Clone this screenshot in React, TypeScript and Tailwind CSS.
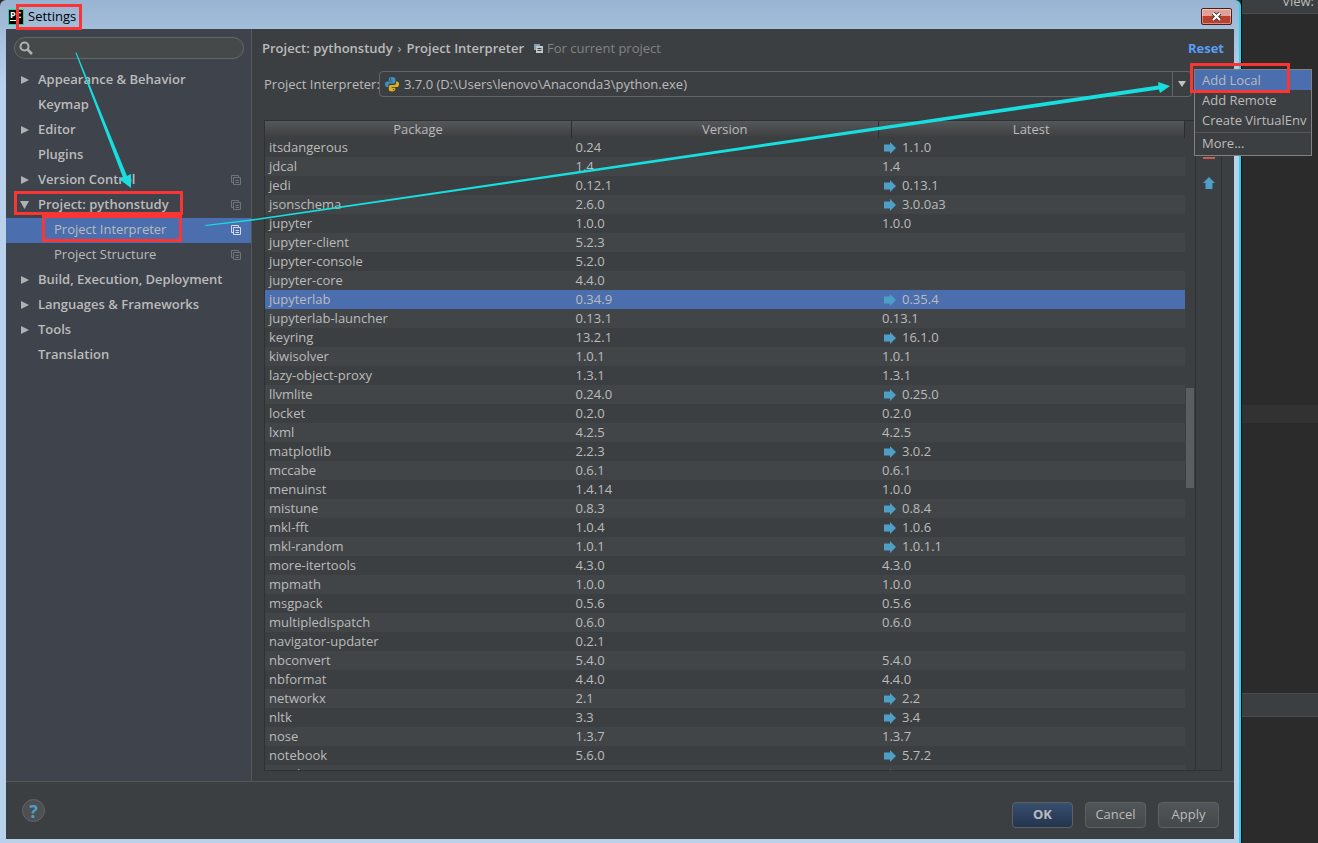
import { clsx } from "clsx"
import type { ReactNode } from "react"

interface NavItem {
  label: string
  arrow?: "closed" | "open"
  child?: boolean
  copy?: boolean
  selected?: boolean
  marked?: boolean
}

interface PackageRow {
  name: string
  version: string
  latest: string
  upgrade?: boolean
}

const NAV: NavItem[] = [
  { label: "Appearance & Behavior", arrow: "closed" },
  { label: "Keymap" },
  { label: "Editor", arrow: "closed" },
  { label: "Plugins" },
  { label: "Version Control", arrow: "closed", copy: true },
  { label: "Project: pythonstudy", arrow: "open", copy: true, marked: true },
  { label: "Project Interpreter", child: true, copy: true, selected: true, marked: true },
  { label: "Project Structure", child: true, copy: true },
  { label: "Build, Execution, Deployment", arrow: "closed" },
  { label: "Languages & Frameworks", arrow: "closed" },
  { label: "Tools", arrow: "closed" },
  { label: "Translation" },
]

const PACKAGES: PackageRow[] = [
  { name: "itsdangerous", version: "0.24", latest: "1.1.0", upgrade: true },
  { name: "jdcal", version: "1.4", latest: "1.4" },
  { name: "jedi", version: "0.12.1", latest: "0.13.1", upgrade: true },
  { name: "jsonschema", version: "2.6.0", latest: "3.0.0a3", upgrade: true },
  { name: "jupyter", version: "1.0.0", latest: "1.0.0" },
  { name: "jupyter-client", version: "5.2.3", latest: "" },
  { name: "jupyter-console", version: "5.2.0", latest: "" },
  { name: "jupyter-core", version: "4.4.0", latest: "" },
  { name: "jupyterlab", version: "0.34.9", latest: "0.35.4", upgrade: true },
  { name: "jupyterlab-launcher", version: "0.13.1", latest: "0.13.1" },
  { name: "keyring", version: "13.2.1", latest: "16.1.0", upgrade: true },
  { name: "kiwisolver", version: "1.0.1", latest: "1.0.1" },
  { name: "lazy-object-proxy", version: "1.3.1", latest: "1.3.1" },
  { name: "llvmlite", version: "0.24.0", latest: "0.25.0", upgrade: true },
  { name: "locket", version: "0.2.0", latest: "0.2.0" },
  { name: "lxml", version: "4.2.5", latest: "4.2.5" },
  { name: "matplotlib", version: "2.2.3", latest: "3.0.2", upgrade: true },
  { name: "mccabe", version: "0.6.1", latest: "0.6.1" },
  { name: "menuinst", version: "1.4.14", latest: "1.0.0" },
  { name: "mistune", version: "0.8.3", latest: "0.8.4", upgrade: true },
  { name: "mkl-fft", version: "1.0.4", latest: "1.0.6", upgrade: true },
  { name: "mkl-random", version: "1.0.1", latest: "1.0.1.1", upgrade: true },
  { name: "more-itertools", version: "4.3.0", latest: "4.3.0" },
  { name: "mpmath", version: "1.0.0", latest: "1.0.0" },
  { name: "msgpack", version: "0.5.6", latest: "0.5.6" },
  { name: "multipledispatch", version: "0.6.0", latest: "0.6.0" },
  { name: "navigator-updater", version: "0.2.1", latest: "" },
  { name: "nbconvert", version: "5.4.0", latest: "5.4.0" },
  { name: "nbformat", version: "4.4.0", latest: "4.4.0" },
  { name: "networkx", version: "2.1", latest: "2.2", upgrade: true },
  { name: "nltk", version: "3.3", latest: "3.4", upgrade: true },
  { name: "nose", version: "1.3.7", latest: "1.3.7" },
  { name: "notebook", version: "5.6.0", latest: "5.7.2", upgrade: true },
  { name: "numba", version: "", latest: "", upgrade: true },
]

const SELECTED_PACKAGE = "jupyterlab"

/** Red highlight frame laid over its nearest relative parent. */
function Mark({ className }: { className: string }) {
  return <span aria-hidden="true" className={clsx("pointer-events-none absolute z-20 border-3 border-[#fb3434]", className)} />
}

function AppIcon() {
  return (
    <span className="flex h-4 w-4 flex-col items-start border border-[#21d789] bg-black pl-px text-[9px] leading-[9px] font-bold text-white">
      PC
      <span className="mt-px h-px w-1.5 bg-white" />
    </span>
  )
}

function PythonIcon() {
  return (
    <svg viewBox="0 0 16 16" className="h-4 w-4 shrink-0" aria-hidden="true">
      <path d="M8 1C5.600 1 4.800 1.900 4.800 3.200V4.800H8.400V5.400H3.200C1.700 5.400 1 6.600 1 8.300S1.800 11 3 11H4.300V9.400C4.300 8.200 5.200 7.500 6.400 7.500H9.600C10.600 7.500 11.400 6.700 11.400 5.700V3.200C11.400 1.800 10.300 1 8 1Z" fill="#3f8fbd" />
      <path d="M8 15.500C10.400 15.500 11.300 14.600 11.300 13.300V11.700H7.700V11.100H12.900C14.300 11.100 15 9.900 15 8.200S14.300 5.400 13 5.400H12.100V7C12.100 8.200 11.200 9 10 9H6.600C5.600 9 4.800 9.800 4.800 10.800V13.300C4.800 14.700 5.900 15.500 8 15.500Z" fill="#deb01b" />
      <circle cx="6.500" cy="2.900" r="0.700" fill="#2b3b47" />
      <circle cx="9.600" cy="13.600" r="0.700" fill="#5b4a10" />
    </svg>
  )
}

function CopyIcon({ className }: { className?: string }) {
  return (
    <svg viewBox="0 0 10 10" className={clsx("h-2.5 w-2.5 shrink-0", className)} fill="none" stroke="currentColor" aria-hidden="true">
      <path d="M2 7.500H.5V.5H7.500V2M2.500 2.500H9.500V9.500H2.500ZM4.500 5.500H8M4.500 7.500H8" />
    </svg>
  )
}

/** Filled variant of the copy icon, used in the breadcrumb. */
function ProjectBadge() {
  return (
    <svg viewBox="0 0 9 9" className="ml-2.5 h-[9px] w-[9px] shrink-0" aria-hidden="true">
      <path d="M0 0H6V2H2V6H0Z" fill="#7fa3b8" />
      <path d="M2 2H9V9H2Z" fill="#c3c7ca" />
      <path d="M3.500 4.500H7.500M3.500 6.500H7.500" stroke="#3c3f41" />
    </svg>
  )
}

function Triangle({ open }: { open?: boolean }) {
  return (
    <svg viewBox="0 0 10 10" className="h-2.5 w-2.5" fill="#afb1b3" aria-hidden="true">
      {open ? <path d="M0 1H9L4.500 9Z" /> : <path d="M1 1L9 5L1 9Z" />}
    </svg>
  )
}

function UpgradeArrow({ className }: { className?: string }) {
  return (
    <svg viewBox="0 0 12 12" className={clsx("h-3 w-3 shrink-0", className)} fill="#4d9fc7" aria-hidden="true">
      <path d="M0 2.500H6V0L12 6L6 12V9.500H0Z" />
    </svg>
  )
}

function NavRow({ item }: { item: NavItem }) {
  return (
    <li className={clsx("relative flex h-[25px] items-center pr-2.5 pb-0.5", item.selected && "bg-[#4b6eaf]")}>
      <span className="flex w-8 pl-3.5">{item.arrow && <Triangle open={item.arrow === "open"} />}</span>
      <a
        href="#"
        className={clsx("flex-1 whitespace-nowrap", item.child ? "pl-4" : "font-semibold")}
        aria-current={item.selected ? "page" : undefined}
      >
        {item.label}
      </a>
      {item.copy && <CopyIcon className={item.selected ? "text-[#d5dbe6]" : "text-[#6f747a]"} />}
      {item.marked && (
        <Mark className={item.child ? "-top-[3px] left-9 h-[27px] w-[140px]" : "-top-0.5 left-2 h-6 w-[169px]"} />
      )}
    </li>
  )
}

function Sidebar() {
  return (
    <nav className="w-[246px] shrink-0 border-r border-[#555759] bg-[#3f434c] pt-2">
      <label className="mr-[7px] mb-[9px] ml-2 flex h-[22px] items-center rounded-full border border-[#646769] bg-[#45494a] px-1">
        <svg viewBox="0 0 14 14" className="h-3.5 w-3.5" fill="none" stroke="#afb1b3" aria-hidden="true">
          <circle cx="5.500" cy="5.500" r="4" strokeWidth="2" />
          <path d="M8.500 8.500L13 13" strokeWidth="2.500" />
        </svg>
        <input type="search" aria-label="Search settings" className="ml-1 min-w-0 flex-1 bg-transparent outline-none" />
      </label>
      <ul>
        {NAV.map((item) => (
          <NavRow key={item.label} item={item} />
        ))}
      </ul>
    </nav>
  )
}

function MenuItem({ active, children }: { active?: boolean; children: ReactNode }) {
  return (
    <button
      type="button"
      role="menuitem"
      className={clsx("block h-5 w-full pl-[7px] text-left whitespace-nowrap", active && "bg-[#4b6eaf]")}
    >
      {children}
    </button>
  )
}

function InterpreterMenu() {
  return (
    <div role="menu" className="absolute -top-[3px] left-full z-10 ml-[3px] w-[118px] border border-[#7f8183] bg-[#3c3f41]">
      <MenuItem active>Add Local</MenuItem>
      <MenuItem>Add Remote</MenuItem>
      <MenuItem>Create VirtualEnv</MenuItem>
      <hr className="mt-0.5 border-[#555759]" />
      <div className="pb-0.5">
        <MenuItem>More...</MenuItem>
      </div>
      <Mark className="-top-[7px] -left-[5px] h-[30px] w-[100px]" />
    </div>
  )
}

function PackageTable() {
  return (
    <table className="w-full table-fixed border-collapse text-left">
      <thead>
        <tr className="h-[17px] bg-linear-to-b from-[#55585a] to-[#3b3d3f]">
          {["Package", "Version", "Latest"].map((title) => (
            <th key={title} className="border-r border-[#2b2d2e] p-0 text-center align-top leading-4 font-normal">
              {title}
            </th>
          ))}
        </tr>
      </thead>
      <tbody>
        {PACKAGES.map((row) => (
          <tr
            key={row.name}
            className={clsx("h-[19px]", row.name === SELECTED_PACKAGE ? "bg-[#4b6eaf]" : "odd:bg-[#3c3f41] even:bg-[#414547]")}
          >
            <td className="p-0 pl-1">{row.name}</td>
            <td className="p-0 pl-1">{row.version}</td>
            <td className="p-0 pl-1">
              <span className="flex items-center gap-1.5">
                {row.upgrade && <UpgradeArrow className="ml-0.5" />}
                {row.latest}
              </span>
            </td>
          </tr>
        ))}
      </tbody>
    </table>
  )
}

function InterpreterPanel() {
  return (
    <main className="flex min-w-0 flex-1 flex-col pr-3 pb-2.5 pl-3">
      <header className="-mx-0.5 mb-1 flex h-[38px] items-center font-semibold whitespace-nowrap">
        <span>Project: pythonstudy</span>
        <span className="mx-[5px] font-normal">›</span>
        <span>Project Interpreter</span>
        <ProjectBadge />
        <span className="ml-1 font-normal text-[#808284]">For current project</span>
        <a href="#" className="ml-auto font-bold text-[#589df6]">
          Reset
        </a>
      </header>

      <div className="flex h-[26px] items-center">
        <span className="w-[115px] shrink-0 whitespace-nowrap">Project Interpreter:</span>
        <div className="relative mr-[30px] flex h-full min-w-0 flex-1 rounded-sm border border-[#646769]">
          <button type="button" className="flex min-w-0 flex-1 items-center gap-1 pl-1 text-left">
            <PythonIcon />
            3.7.0 (D:\Users\lenovo\Anaconda3\python.exe)
          </button>
          <button type="button" aria-label="Interpreter actions" className="flex w-[19px] items-center justify-center border-l border-[#646769]">
            <svg viewBox="0 0 8 6" className="h-1.5 w-2" fill="#c0c2c4" aria-hidden="true">
              <path d="M0 0H8L4 6Z" />
            </svg>
          </button>
          <InterpreterMenu />
        </div>
      </div>

      <section className="mt-[23px] flex min-h-0 flex-1 border border-[#2f3233]">
        <div className="min-w-0 flex-1 overflow-hidden">
          <PackageTable />
        </div>
        <div className="flex w-[11px] flex-col border-r border-[#2f3233] px-px">
          <div className="mt-[267px] h-[100px] bg-[#5b5e5f]" />
        </div>
        <div className="flex w-[25px] flex-col items-center pt-9">
          <button type="button" aria-label="Uninstall" className="h-0.5 w-3 bg-[#cc5a4f]" />
          <button type="button" aria-label="Upgrade" className="mt-[18px]">
            <UpgradeArrow className="-rotate-90" />
          </button>
        </div>
      </section>
    </main>
  )
}

function DialogButton({ primary, children }: { primary?: boolean; children: ReactNode }) {
  return (
    <button
      type="button"
      className={clsx(
        "h-[26px] w-[61px] rounded-sm border border-[#5e6162] bg-linear-to-b",
        primary ? "from-[#384f6f] to-[#23344e] font-bold" : "from-[#515658] to-[#434849]",
      )}
    >
      {children}
    </button>
  )
}

function Footer() {
  return (
    <footer className="flex h-[58px] shrink-0 items-center border-t border-[#555759] pt-2 pr-[15px] pl-4">
      <button
        type="button"
        aria-label="Help"
        className="mb-2 h-[23px] w-[23px] rounded-full border border-[#626567] bg-[#4c5052] text-lg leading-5 font-bold text-[#4d9fc7]"
      >
        ?
      </button>
      <div className="ml-auto flex gap-3">
        <DialogButton primary>OK</DialogButton>
        <DialogButton>Cancel</DialogButton>
        <DialogButton>Apply</DialogButton>
      </div>
    </footer>
  )
}

function TitleBar() {
  return (
    <div className="flex h-[29px] shrink-0 items-center pt-1 pr-0.5 pl-0.5 text-black">
      <AppIcon />
      <span className="relative ml-1">
        Settings
        <Mark className="-top-[3px] -left-3 h-[26px] w-[66px]" />
      </span>
      <button
        type="button"
        aria-label="Close"
        className="ml-auto flex h-[17px] w-[31px] items-center justify-center rounded-xs border border-[#4b1d20] bg-linear-to-b from-[#e0a094] from-50% to-[#b8402c] to-50% ring-1 ring-white/40 ring-inset"
      >
        <svg viewBox="0 0 11 9" className="h-[9px] w-[11px]" aria-hidden="true">
          <path d="M2 1L9 8M9 1L2 8" stroke="#4b3b40" strokeWidth="4" />
          <path d="M2 1L9 8M9 1L2 8" stroke="#fff" strokeWidth="2" />
        </svg>
      </button>
    </div>
  )
}

/** Strip of the editor that stays visible behind the dialog. */
function EditorBackdrop() {
  return (
    <aside className="flex w-[77px] shrink-0 flex-col overflow-hidden border-l border-black bg-[#2b2b2b]">
      <div className="flex h-[14px] items-end justify-end border-b border-[#4a4c4e] bg-[#3c3f41] pr-1 pb-0.5">
        <span>View:</span>
      </div>
      <div className="mt-[391px] h-[18px] bg-[#323232]" />
      <div className="mt-[270px] h-6 border-y border-[#494b4d] bg-[#3c3f41]" />
    </aside>
  )
}

function Arrows() {
  return (
    <svg className="pointer-events-none absolute inset-0 z-30 h-full w-full" fill="#17dfdf" aria-hidden="true">
      <path d="M75.500 53L76.500 52.500L127 176L131 174L131 188L119 179L123 177.500Z" />
      <path d="M205 225L206 226L250 221L1159 89.500L1160 93L1170 86L1158 82L1158.500 85.500L250 219.500Z" />
    </svg>
  )
}

export default function App() {
  return (
    <div className="relative flex h-screen overflow-hidden bg-[#2b2b2b] font-['Open_Sans','Noto_Sans',sans-serif] text-[13px] leading-[19px] text-[#bbbbbb]">
      <div className="flex min-w-0 flex-1 flex-col rounded-t-md border-r-2 border-[#25d5ee] bg-linear-to-b from-[#98b4d2] to-[#b9d1ea] to-10% pr-[5px] pb-1 pl-1.5">
        <TitleBar />
        <div className="flex min-h-0 flex-1 flex-col bg-[#3c3f41]">
          <div className="flex min-h-0 flex-1">
            <Sidebar />
            <InterpreterPanel />
          </div>
          <Footer />
        </div>
      </div>
      <EditorBackdrop />
      <Arrows />
    </div>
  )
}
